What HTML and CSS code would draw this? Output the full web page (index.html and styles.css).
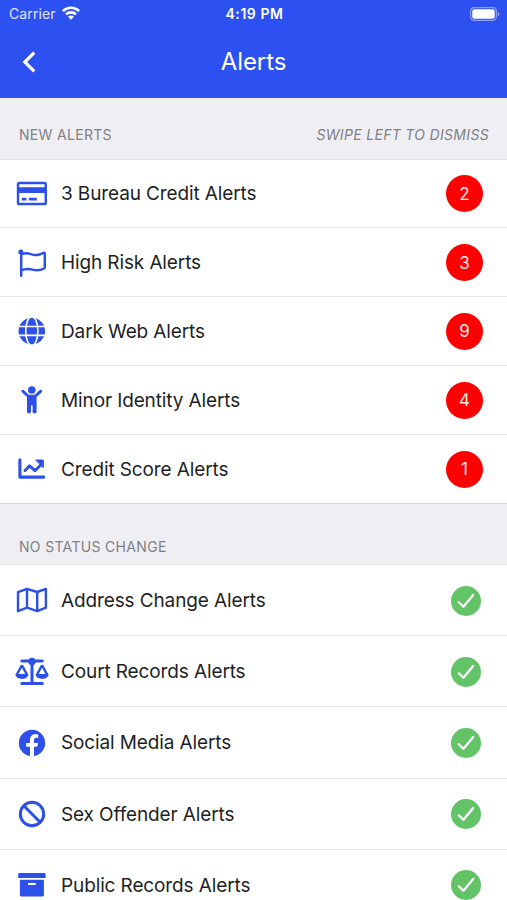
FILE: index.html
```html
<!DOCTYPE html>
<html lang="en">
<head>
<meta charset="utf-8">
<title>Alerts</title>
<link rel="stylesheet" href="styles.css">
</head>
<body>
<svg class="defs" width="0" height="0" aria-hidden="true">
  <symbol id="check" viewBox="0 0 30 30"><circle cx="15" cy="15" r="15" fill="#62c466"/><path d="M7.800 16.300l4.600 4.500L22.200 8.900" fill="none" stroke="#fff" stroke-width="2.300" stroke-linecap="round" stroke-linejoin="round"/></symbol>
</svg>
<header class="top">
  <div class="status">
    <div class="carrier"><span>Carrier</span>
      <svg class="wifi" width="18" height="14" viewBox="0 0 18 14" fill="none" stroke="#fff" stroke-width="2.600"><path d="M.9 5.100C5.400.6 12.600.6 17.100 5.100M4 8.400c2.800-2.700 7.200-2.700 10 0"/><path d="M6 10.700c1.700-1.500 4.300-1.500 6 0L9 13.700z" fill="#fff" stroke="none"/></svg>
    </div>
    <time class="clock">4:19 PM</time>
    <svg class="battery" width="30" height="14" viewBox="0 0 30 14"><rect x=".7" y=".7" width="25.600" height="12.600" rx="3.500" fill="none" stroke="#8d9ef8" stroke-width="1.200"/><rect x="2.300" y="2.300" width="22.400" height="9.400" rx="2" fill="#fff"/><path d="M27.600 4.700c2.300.7 2.300 3.900 0 4.600z" fill="#8d9ef8"/></svg>
  </div>
  <nav class="nav">
    <svg class="back" width="14" height="22" viewBox="0 0 14 22"><path d="M12.200 1.700L2.800 11l9.400 9.300" fill="none" stroke="#fff" stroke-width="3.200"/></svg>
    <h1>Alerts</h1>
  </nav>
</header>
<main>
  <section>
    <div class="heading"><h2>NEW ALERTS</h2><em>SWIPE LEFT TO DISMISS</em></div>
    <ul class="list active">
      <li><svg class="icon" viewBox="0 0 34 34"><path fill-rule="evenodd" d="M4.400 4.700h25A2.600 2.600 0 0 1 32 7.300v18.400a2.600 2.600 0 0 1-2.600 2.600h-25a2.600 2.600 0 0 1-2.600-2.600V7.300a2.600 2.600 0 0 1 2.600-2.600zM4.200 7.200v3.100h25.400V7.200zm0 8.700v9.900h25.400v-9.900z"/><path d="M6.800 20.800h4.600v2.700H6.800zM13.800 20.800h8v2.700h-8z"/></svg><span>3 Bureau Credit Alerts</span><b>2</b></li>
      <li><svg class="icon line" viewBox="0 0 34 34"><circle cx="5.800" cy="6" r="2.500" fill="currentColor" stroke="none"/><path stroke-width="2.500" d="M6.200 5v24.700M6.200 8.500c8-4 10 2.200 17.500.2 2.200-.5 3.400-1.300 4.600-1.900.8-.4 1.500 0 1.500.9V21.200c0 .7-.3 1-.8 1.300-10 5.500-12.500-3-22.800 1.900"/></svg><span>High Risk Alerts</span><b>3</b></li>
      <li><svg class="icon" viewBox="0 0 34 34"><circle cx="16.800" cy="17.100" r="13.300"/><g fill="none" stroke="#fff" stroke-width="1.600"><ellipse cx="16.800" cy="17.100" rx="6.100" ry="14.500"/><path d="M3 12.500h28M3 21.400h28"/></g></svg><span>Dark Web Alerts</span><b>9</b></li>
      <li><svg class="icon" viewBox="0 0 34 34"><circle cx="16.800" cy="7" r="3.800"/><path d="M8.800 7.100l5 4.700h6l5-4.700c1.700-1.200 3.300.6 2 2.100L21.600 14v14.800c0 2.300-4 2.300-4 0v-6.200h-1.600v6.200c0 2.300-4 2.300-4 0V14L6.900 9.200C5.500 7.700 7.100 5.900 8.800 7.100z"/></svg><span>Minor Identity Alerts</span><b>4</b></li>
      <li><svg class="icon line" viewBox="0 0 34 34"><path stroke-width="3.100" d="M4.900 7.800v17.300h23.800"/><path stroke-width="3" d="M10 18.500l4.600-4.600 5.300 4.800 6-6"/><path d="M21 8h7.300v7.400z" fill="currentColor" stroke-width="1"/></svg><span>Credit Score Alerts</span><b>1</b></li>
    </ul>
  </section>
  <section>
    <div class="heading lower"><h2>NO STATUS CHANGE</h2></div>
    <ul class="list clear">
      <li><svg class="icon line" viewBox="0 0 34 34"><path stroke-width="2.400" d="M3 8.200l9-3.300L22.200 8 30.900 4.900v18.800L22.200 27.200 12 23.700 3 27.200zM12 4.900v18.800M22.200 8v19.200"/></svg><span>Address Change Alerts</span><svg class="check"><use href="#check"/></svg></li>
      <li><svg class="icon line" viewBox="0 0 34 34"><circle cx="17" cy="6.500" r="3.700" fill="currentColor" stroke="none"/><path stroke-width="3" d="M6.800 6.100h20.500M17 7v21.500M6.800 28.500h20.500"/><path stroke-width="2.500" d="M1.900 19.500l4.300-8q.7-1 1.400 0l4.300 8M22.100 19.500l4.300-8q.7-1 1.400 0l4.300 8"/><path stroke="none" fill="currentColor" d="M.5 19h12.800c0 6.600-12.800 6.600-12.800 0zM20.700 19h12.800c0 6.600-12.800 6.600-12.800 0z"/></svg><span>Court Records Alerts</span><svg class="check"><use href="#check"/></svg></li>
      <li><svg class="icon" viewBox="0 0 34 34"><circle cx="17" cy="17" r="13.200"/><path fill="#fff" d="M15 30.500v-9.700h-3.800v-3.900H15v-3c0-3.600 2.200-5.600 5.400-5.600 1.100 0 2.100.1 2.800.3v3.200h-1.800c-1.800 0-2.400 1-2.400 2.300v2.800h4l-.7 3.900H19v9.700z"/></svg><span>Social Media Alerts</span><svg class="check"><use href="#check"/></svg></li>
      <li><svg class="icon line" viewBox="0 0 34 34"><circle cx="17" cy="17" r="11.700" stroke-width="3"/><path stroke-width="3" d="M8.800 8.800l16.400 16.400"/></svg><span>Sex Offender Alerts</span><svg class="check"><use href="#check"/></svg></li>
      <li><svg class="icon" viewBox="0 0 34 34"><path d="M4.500 5h24.700c.9 0 1.400.5 1.400 1.400V10H3.200V6.400C3.200 5.500 3.700 5 4.500 5z"/><path fill-rule="evenodd" d="M4.900 11.700h24v15.400c0 .9-.5 1.400-1.400 1.400H6.300c-.9 0-1.400-.5-1.400-1.400zm8.800 3.200c-1 0-1 2 0 2h6.400c1 0 1-2 0-2z"/></svg><span>Public Records Alerts</span><svg class="check"><use href="#check"/></svg></li>
    </ul>
  </section>
</main>
</body>
</html>
```
FILE: styles.css
```css
* { box-sizing: border-box; }
html, body { height: 100%; }
body {
  margin: 0;
  overflow: hidden;
  background: #fff;
  color: #1e1f24;
  font-family: Inter, "Liberation Sans", sans-serif;
}
h1, h2, ul { margin: 0; padding: 0; font-weight: 400; }
.defs { display: none; }
.top { height: 98.250px; background: #2d50f0; color: #fff; }
.status {
  display: grid;
  grid-template-columns: 1fr auto 1fr;
  align-items: center;
  height: 27px;
  padding: 0 7px 0 9px;
}
.carrier { display: flex; align-items: center; gap: 6px; font-size: 14px; letter-spacing: .1px; color: #e2e7ff; }
.wifi { margin-bottom: 2px; }
.clock { font-size: 14px; font-weight: 600; letter-spacing: .55px; }
.battery { justify-self: end; }
.nav { display: grid; grid-template-columns: 1fr auto 1fr; align-items: center; height: 69px; padding: 0 22px; }
.nav h1 { font-size: 24px; letter-spacing: -.1px; }
.heading {
  display: flex;
  justify-content: space-between;
  align-items: center;
  height: 61.250px;
  padding: 12px 18px 0 19px;
  background: #efeff3;
  border-bottom: 1px solid #e4e4e7;
  color: #808085;
  font-size: 14px;
  letter-spacing: .32px;
}
.heading h2 { font-size: 14px; }
.lower { height: 61.750px; padding-top: 24px; border-top: 1px solid #d4d4d7; }
.list { list-style: none; }
.list li {
  display: flex;
  align-items: center;
  height: 68.750px;
  padding: 1px 24px 0 15px;
  border-bottom: 1px solid #e7e7ea;
}
.active li:last-child { border-bottom: 0; }
.clear li { height: 71.200px; padding-right: 26px; }
.icon { flex: none; width: 34px; height: 34px; color: #2d50e9; fill: currentColor; }
.line { fill: none; stroke: currentColor; stroke-linecap: round; stroke-linejoin: round; }
.list span { flex: 1; margin-left: 12px; font-size: 19px; letter-spacing: -.12px; white-space: nowrap; }
.list b {
  display: grid;
  place-items: center;
  width: 37px;
  height: 37px;
  border-radius: 50%;
  background: #fe0000;
  color: #ffe9e9;
  font-size: 17px;
  font-weight: 400;
}
.check { width: 30px; height: 30px; }
```
